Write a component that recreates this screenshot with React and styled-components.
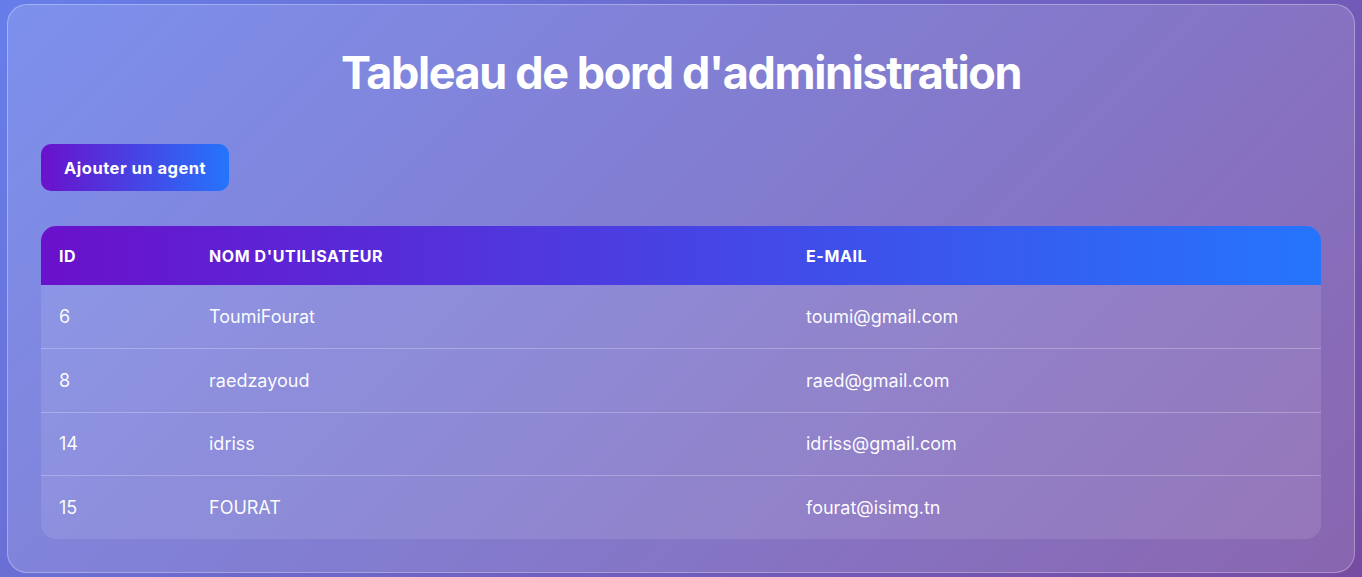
import React from "react";
import styled, { createGlobalStyle } from "styled-components";

const Global = createGlobalStyle`
  html, body { margin: 0; padding: 0; }
  body {
    min-height: 577px;
    background: linear-gradient(135deg, #667eea 0%, #764ba2 100%);
    font-family: Inter, "Noto Sans", sans-serif;
    color: #fff;
  }
  #root { padding: 4px 7px; }
`;

const Card = styled.div`
  box-sizing: border-box;
  height: 569px;
  background: rgba(255, 255, 255, 0.15);
  border: 1px solid rgba(255, 255, 255, 0.3);
  border-radius: 20px;
  padding: 41px 33px 34px;
  display: flex;
  flex-direction: column;
`;

const Title = styled.h1`
  margin: 0 0 44px;
  text-align: center;
  font-size: 45px;
  line-height: 54px;
  font-weight: 700;
  letter-spacing: -1.4px;
  color: #fff;
`;

const Toolbar = styled.div`
  display: flex;
  margin-bottom: 35px;
`;

const AddButton = styled.button`
  height: 47px;
  padding: 0 23px;
  border: none;
  border-radius: 10px;
  background: linear-gradient(90deg, #6a11cb 0%, #2575fc 100%);
  color: #fff;
  font-family: Inter, "Noto Sans", sans-serif;
  font-size: 16.5px;
  font-weight: 700;
  letter-spacing: 0.5px;
  cursor: pointer;
`;

const Table = styled.table`
  width: 100%;
  border-collapse: collapse;
  table-layout: fixed;
  background: rgba(255, 255, 255, 0.1);
  border-radius: 15px;
  overflow: hidden;
`;

const HeadRow = styled.tr`
  background: linear-gradient(90deg, #6a11cb 0%, #2575fc 100%);
`;

const Th = styled.th`
  height: 59px;
  padding: 0 18px;
  text-align: left;
  font-size: 16px;
  font-weight: 700;
  text-transform: uppercase;
  letter-spacing: 0.6px;
  color: #fff;
  width: ${(p) => p.$w || "auto"};
  box-sizing: border-box;
`;

const Row = styled.tr`
  border-top: 1px solid rgba(255, 255, 255, 0.25);
  &:first-child { border-top: none; }
`;

const Td = styled.td`
  height: 62.8px;
  padding: 0 18px;
  font-size: 18px;
  color: rgba(255, 255, 255, 0.97);
`;

const agents = [
  { id: 6, name: "ToumiFourat", email: "toumi@gmail.com" },
  { id: 8, name: "raedzayoud", email: "raed@gmail.com" },
  { id: 14, name: "idriss", email: "idriss@gmail.com" },
  { id: 15, name: "FOURAT", email: "fourat@isimg.tn" },
];

export default function App() {
  return (
    <>
      <Global />
      <Card>
        <Title>Tableau de bord d'administration</Title>
        <Toolbar>
          <AddButton>Ajouter un agent</AddButton>
        </Toolbar>
        <Table>
          <thead>
            <HeadRow>
              <Th $w="150px">ID</Th>
              <Th $w="597px">Nom d'utilisateur</Th>
              <Th>E-mail</Th>
            </HeadRow>
          </thead>
          <tbody>
            {agents.map((a) => (
              <Row key={a.id}>
                <Td>{a.id}</Td>
                <Td>{a.name}</Td>
                <Td>{a.email}</Td>
              </Row>
            ))}
          </tbody>
        </Table>
      </Card>
    </>
  );
}
